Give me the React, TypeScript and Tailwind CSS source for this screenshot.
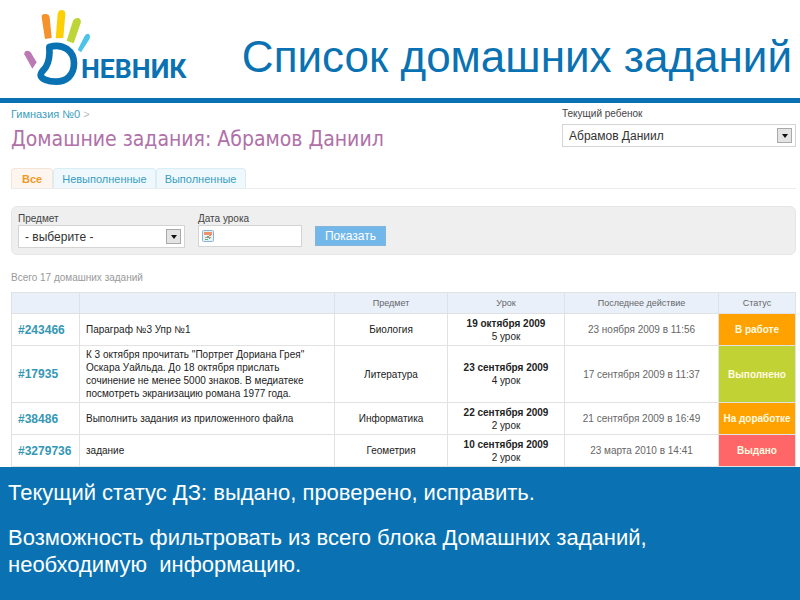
import type { ReactNode } from 'react';

interface Homework {
  id: string;
  text: string;
  subject: string;
  date: string;
  lesson: string;
  updated: string;
  status: string;
  statusClass: string;
}

const homeworks: Homework[] = [
  {
    id: '243466',
    text: 'Параграф №3 Упр №1',
    subject: 'Биология',
    date: '19 октября 2009',
    lesson: '5 урок',
    updated: '23 ноября 2009 в 11:56',
    status: 'В работе',
    statusClass: 'bg-[#ffa200]',
  },
  {
    id: '17935',
    text: 'К 3 октября прочитать "Портрет Дориана Грея" Оскара Уайльда. До 18 октября прислать сочинение не менее 5000 знаков. В медиатеке посмотреть экранизацию романа 1977 года.',
    subject: 'Литература',
    date: '23 сентября 2009',
    lesson: '4 урок',
    updated: '17 сентября 2009 в 11:37',
    status: 'Выполнено',
    statusClass: 'bg-[#c1d235]',
  },
  {
    id: '38486',
    text: 'Выполнить задания из приложенного файла',
    subject: 'Информатика',
    date: '22 сентября 2009',
    lesson: '2 урок',
    updated: '21 сентября 2009 в 16:49',
    status: 'На доработке',
    statusClass: 'bg-[#ffa200]',
  },
  {
    id: '3279736',
    text: 'задание',
    subject: 'Геометрия',
    date: '10 сентября 2009',
    lesson: '2 урок',
    updated: '23 марта 2010 в 14:41',
    status: 'Выдано',
    statusClass: 'bg-[#ff6668]',
  },
];

function Logo() {
  return (
    <svg viewBox="0 0 660 294" className="w-[220px] h-[98px] shrink-0" role="img" aria-label="Дневник">
      <path d="M125 52Q124 42 135 42Q147 41 149 52L155 114L135 117Z" fill="#f5922b" />
      <path d="M173 42Q175 30 186 30Q197 31 196 43L190 114L167 115Z" fill="#fdd006" />
      <path d="M219 62Q224 52 235 54Q245 58 242 69L221 130L200 122Z" fill="#bdd536" />
      <path d="M254 108Q260 99 267 102Q272 107 269 116L243 157L233 149Z" fill="#4cc4ea" />
      <path d="M73 163Q72 153 82 152Q88 152 92 157L110 187L97 206Z" fill="#bc7ab4" />
      <path
        d="M148 141C190 128 222 154 222 190C222 226 199 245 168 245C143 245 125 237 122 227C120 218 131 211 138 200C148 184 150 168 148 141Z"
        fill="none"
        stroke="#0a72b2"
        strokeWidth="20"
        strokeLinejoin="round"
      />
      <text
        x="243"
        y="234"
        fontFamily="Roboto, sans-serif"
        fontSize="80"
        fontWeight="700"
        fill="#0a72b2"
      >
        НЕВНИК
      </text>
    </svg>
  );
}

function SelectArrow() {
  return (
    <span className="pointer-events-none absolute inset-y-0 right-1 flex items-center">
      <span className="flex h-[15px] w-[15px] items-center justify-center border border-[#a9a9a9] bg-[#e4e4e4]">
        <svg viewBox="0 0 6 4" className="h-1 w-1.5">
          <path d="M0 0H6L3 4Z" fill="#111" />
        </svg>
      </span>
    </span>
  );
}

function CalendarIcon() {
  return (
    <svg viewBox="0 0 12 12" className="h-3 w-3">
      <rect x="0.5" y="0.5" width="11" height="11" rx="1" fill="#e6f1f7" stroke="#8fb4cf" />
      <rect x="2" y="2" width="8" height="3" fill="#f0936b" />
      <path d="M7 5h2v1h-2zM3 7h2v1h-2zM7 7h2v1h-2z" fill="#e58a68" />
      <path d="M5 6h2v2h-2zM3 9h3v1h-3zM7 8h1v1h-1z" fill="#5fae84" />
    </svg>
  );
}

function Th({ children }: { children?: ReactNode }) {
  return (
    <th className="h-[21px] border border-[#dfe1e4] bg-[#e9f0fa] p-0 text-center text-[9px] leading-3 font-normal text-[#666]">
      {children}
    </th>
  );
}

export default function App() {
  const tab = 'h-5 rounded-t border border-b-0 text-[11px] leading-3';

  return (
    <div className="flex min-h-screen flex-col bg-white font-['Liberation_Sans',Arial,sans-serif] text-[#333]">
      <header className="flex items-center justify-between border-b-[5px] border-[#0a72b2] pr-2">
        <Logo />
        <h1 className="pt-4 text-[44px] leading-[48px] whitespace-nowrap text-[#0a72b2]">Список домашних заданий</h1>
      </header>

      <main className="pr-1 pl-[11px]">
        <div className="flex justify-between">
          <div className="pt-1">
            <nav className="text-[11px] leading-[14px] text-[#bbb]">
              <a href="#" className="text-[#3a9dbd]">Гимназия №0</a> &gt;
            </nav>
            <h2 className="pt-1 font-['DejaVu_Sans_Condensed','DejaVu_Sans',sans-serif] text-[21px] leading-7 text-[#b070a8]">
              Домашние задания: Абрамов Даниил
            </h2>
          </div>
          <div className="w-[234px] pt-1">
            <label htmlFor="child" className="block text-[10px] leading-[14px] text-[#444]">
              Текущий ребенок
            </label>
            <div className="relative mt-[3px]">
              <select id="child" className="block h-[23px] w-full appearance-none border border-[#d4d4d4] bg-white px-1.5 text-xs leading-4">
                <option>Абрамов Даниил</option>
              </select>
              <SelectArrow />
            </div>
          </div>
        </div>

        <div className="mt-[15px] flex border-b border-[#ececec]">
          <button className={`${tab} border-[#f3e6d8] bg-[#fdf5ee] px-2.5 font-bold text-[#ef9a26]`}>Все</button>
          <button className={`${tab} border-[#d9edf5] bg-[#eff9fd] px-2 text-[#3a9dbd]`}>Невыполненные</button>
          <button className={`${tab} border-[#d9edf5] bg-[#eff9fd] px-2 text-[#3a9dbd]`}>Выполненные</button>
        </div>

        <form className="mt-[17px] flex h-[49px] items-start rounded-md border border-[#e6e6e6] bg-[#efefef] px-1.5 pt-1.5">
          <div className="w-[167px]">
            <label htmlFor="subject" className="block text-[10px] leading-3 text-[#444]">Предмет</label>
            <div className="relative">
              <select id="subject" className="block h-[23px] w-full appearance-none border border-[#d4d4d4] bg-white px-1.5 text-xs leading-4">
                <option>- выберите -</option>
              </select>
              <SelectArrow />
            </div>
          </div>
          <div className="ml-[13px] w-[104px]">
            <label htmlFor="date" className="block text-[10px] leading-3 text-[#444]">Дата урока</label>
            <div className="relative">
              <input id="date" type="text" className="block h-[22px] w-full border border-[#d4d4d4] bg-white pl-5 text-xs" />
              <span className="pointer-events-none absolute inset-y-0 left-1 flex items-center">
                <CalendarIcon />
              </span>
            </div>
          </div>
          <button type="button" className="mt-[13px] ml-[13px] h-5 w-[71px] border border-[#86b4d8] bg-[#72b7ea] text-xs leading-4 text-white">
            Показать
          </button>
        </form>

        <p className="pt-4 text-[10px] leading-[14px] text-[#999]">Всего 17 домашних заданий</p>

        <table className="mt-[7px] w-full table-fixed border-collapse text-[10px] leading-[13px]">
          <colgroup>
            <col className="w-[68px]" />
            <col />
            <col className="w-[113px]" />
            <col className="w-[117px]" />
            <col className="w-[154px]" />
            <col className="w-[77px]" />
          </colgroup>
          <thead>
            <tr>
              <Th />
              <Th />
              <Th>Предмет</Th>
              <Th>Урок</Th>
              <Th>Последнее действие</Th>
              <Th>Статус</Th>
            </tr>
          </thead>
          <tbody>
            {homeworks.map((hw) => (
              <tr key={hw.id} className="h-8">
                <td className="border border-[#e2e2e2] px-1.5 text-xs font-bold">
                  <a href="#" className="text-[#3597b5]">#{hw.id}</a>
                </td>
                <td className="border border-[#e2e2e2] py-0.5 pr-4 pl-1.5 text-[#222]">{hw.text}</td>
                <td className="border border-[#e2e2e2] text-center text-[#222]">{hw.subject}</td>
                <td className="border border-[#e2e2e2] text-center text-[#222]">
                  <b>{hw.date}</b>
                  <br />
                  {hw.lesson}
                </td>
                <td className="border border-[#e2e2e2] text-center text-[#666]">{hw.updated}</td>
                <td className={`border border-[#e2e2e2] text-center font-bold text-[#fffbe0] ${hw.statusClass}`}>
                  {hw.status}
                </td>
              </tr>
            ))}
          </tbody>
        </table>
      </main>

      <footer className="grow bg-[#0a72b2] px-2 pt-3 text-[22px] leading-[27px] text-white">
        <p>Текущий статус ДЗ: выдано, проверено, исправить.</p>
        <p className="mt-[18px] whitespace-pre-line">
          {'Возможность фильтровать из всего блока Домашних заданий,\nнеобходимую \u00a0информацию.'}
        </p>
      </footer>
    </div>
  );
}
